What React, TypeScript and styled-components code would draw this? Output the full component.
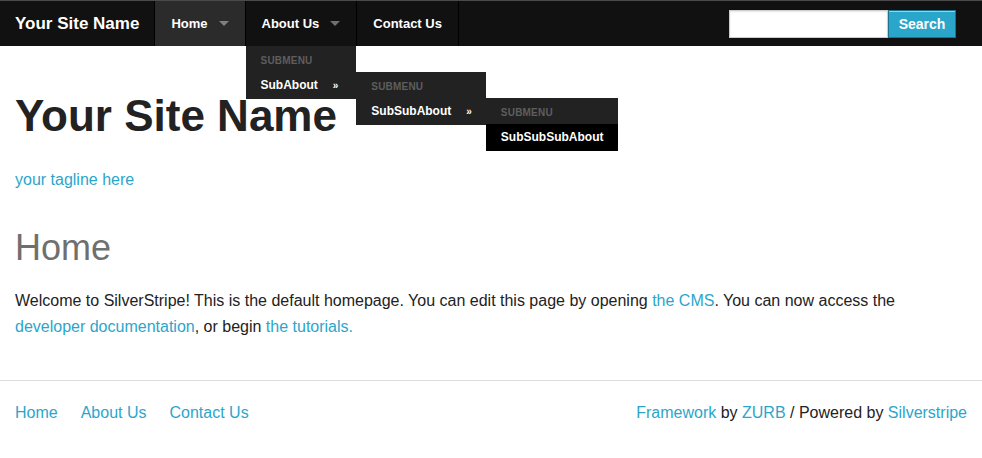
import React from "react";
import styled, { createGlobalStyle } from "styled-components";

const GlobalStyle = createGlobalStyle`
  html, body { margin: 0; padding: 0; background: #fff; }
  body {
    font-family: "Liberation Sans", Arial, Helvetica, sans-serif;
    color: #222;
    -webkit-font-smoothing: antialiased;
  }
  * { box-sizing: border-box; }
`;

const TopBar = styled.nav`
  position: relative;
  z-index: 10;
  display: flex;
  align-items: stretch;
  height: 46px;
  background: #111;
  border-top: 1px solid #4a4a4a;
`;

const Brand = styled.a`
  display: flex;
  align-items: center;
  padding: 0 15px;
  color: #fff;
  font-size: 17px;
  font-weight: bold;
  line-height: 45px;
  text-decoration: none;
  white-space: nowrap;
`;

const Menu = styled.ul`
  display: flex;
  margin: 0;
  padding: 0;
  list-style: none;
  border-right: 1px solid #000;
`;

const MenuItem = styled.li<{ $active?: boolean }>`
  position: relative;
  display: flex;
  align-items: center;
  padding: 0 16px;
  border-left: 1px solid #000;
  background: ${(p) => (p.$active ? "#2b2b2b" : "transparent")};
`;

const MenuLink = styled.a`
  display: flex;
  align-items: center;
  color: #fff;
  font-size: 13px;
  font-weight: bold;
  line-height: 45px;
  text-decoration: none;
  white-space: nowrap;
`;

const Caret = styled.span`
  display: inline-block;
  width: 0;
  height: 0;
  margin-left: 11px;
  border-left: 5px solid transparent;
  border-right: 5px solid transparent;
  border-top: 5px solid rgba(255, 255, 255, 0.4);
`;

const Dropdown = styled.ul<{ $nested?: boolean }>`
  position: absolute;
  top: ${(p) => (p.$nested ? "0" : "100%")};
  left: ${(p) => (p.$nested ? "100%" : "0")};
  min-width: ${(p) => (p.$nested ? "0" : "100%")};
  margin: 0;
  padding: 0;
  list-style: none;
  background: #222;
  white-space: nowrap;
`;

const DropLabel = styled.li`
  height: 26px;
  padding: 10px 15px 0;
  color: #5e5e5e;
  font-size: 10px;
  font-weight: bold;
  line-height: 10px;
  letter-spacing: 0.2px;
`;

const DropItem = styled.li<{ $hover?: boolean }>`
  position: relative;
  height: 27px;
  background: ${(p) => (p.$hover ? "#000" : "transparent")};
`;

const DropLink = styled.a`
  display: flex;
  align-items: center;
  height: 26px;
  padding: 0 14px 0 15px;
  color: #fff;
  font-size: 12px;
  font-weight: bold;
  text-decoration: none;
`;

const Arrow = styled.span`
  margin-left: 15px;
  font-size: 10px;
  font-weight: bold;
  line-height: 1;
  padding-top: 2px;
`;

const SearchForm = styled.form`
  display: flex;
  align-items: center;
  margin: 0 26px 0 auto;
`;

const SearchInput = styled.input`
  width: 159px;
  height: 28px;
  margin: 0;
  padding: 0 5px;
  border: 1px solid #ccc;
  background: #fff;
  box-shadow: inset 0 1px 2px rgba(0, 0, 0, 0.1);
  font-family: inherit;
  font-size: 13px;
  outline: none;
`;

const SearchButton = styled.button`
  width: 68px;
  height: 28px;
  margin: 0;
  padding: 0;
  border: 1px solid #1e728c;
  background: #2ba6cb;
  box-shadow: inset 0 1px 0 rgba(255, 255, 255, 0.5);
  color: #fff;
  font-family: inherit;
  font-size: 14px;
  font-weight: bold;
  cursor: pointer;
`;

const Main = styled.main`
  padding: 0 15px;
`;

const SiteTitle = styled.h1`
  margin: 44px 0 0;
  color: #222;
  font-size: 44px;
  font-weight: bold;
  line-height: 52.8px;
`;

const Tagline = styled.p`
  margin: 25px 0 0;
  color: #2ba6cb;
  font-size: 16px;
  line-height: 24px;
`;

const PageTitle = styled.h2`
  margin: 34px 0 0;
  color: #6f6f6f;
  font-size: 36px;
  font-weight: normal;
  line-height: 43.2px;
`;

const BodyText = styled.p`
  margin: 19px 0 0;
  font-size: 16px;
  line-height: 26px;
`;

const Link = styled.a`
  color: #2ba6cb;
  text-decoration: none;
`;

const Footer = styled.footer`
  display: flex;
  justify-content: space-between;
  align-items: center;
  margin-top: 40px;
  padding: 19px 15px;
  border-top: 1px solid #ddd;
  font-size: 16px;
  line-height: 25.6px;
`;

const FooterNav = styled.nav`
  display: flex;
  gap: 23px;
`;

const Credits = styled.div`
  color: #222;
`;

export default function App() {
  return (
    <>
      <GlobalStyle />
      <TopBar>
        <Brand href="#">Your Site Name</Brand>
        <Menu>
          <MenuItem $active>
            <MenuLink href="#">
              Home
              <Caret />
            </MenuLink>
          </MenuItem>
          <MenuItem>
            <MenuLink href="#">
              About Us
              <Caret />
            </MenuLink>
            <Dropdown>
              <DropLabel>SUBMENU</DropLabel>
              <DropItem>
                <DropLink href="#">
                  SubAbout<Arrow>»</Arrow>
                </DropLink>
                <Dropdown $nested>
                  <DropLabel>SUBMENU</DropLabel>
                  <DropItem>
                    <DropLink href="#">
                      SubSubAbout<Arrow>»</Arrow>
                    </DropLink>
                    <Dropdown $nested>
                      <DropLabel>SUBMENU</DropLabel>
                      <DropItem $hover>
                        <DropLink href="#">SubSubSubAbout</DropLink>
                      </DropItem>
                    </Dropdown>
                  </DropItem>
                </Dropdown>
              </DropItem>
            </Dropdown>
          </MenuItem>
          <MenuItem>
            <MenuLink href="#">Contact Us</MenuLink>
          </MenuItem>
        </Menu>
        <SearchForm onSubmit={(e) => e.preventDefault()}>
          <SearchInput type="text" aria-label="Search" />
          <SearchButton type="submit">Search</SearchButton>
        </SearchForm>
      </TopBar>
      <Main>
        <SiteTitle>Your Site Name</SiteTitle>
        <Tagline>your tagline here</Tagline>
        <PageTitle>Home</PageTitle>
        <BodyText>
          Welcome to SilverStripe! This is the default homepage. You can edit this page by opening{" "}
          <Link href="#">the CMS</Link>. You can now access the{" "}
          <Link href="#">developer documentation</Link>, or begin <Link href="#">the tutorials.</Link>
        </BodyText>
      </Main>
      <Footer>
        <FooterNav>
          <Link href="#">Home</Link>
          <Link href="#">About Us</Link>
          <Link href="#">Contact Us</Link>
        </FooterNav>
        <Credits>
          <Link href="#">Framework</Link> by <Link href="#">ZURB</Link> / Powered by{" "}
          <Link href="#">Silverstripe</Link>
        </Credits>
      </Footer>
    </>
  );
}
